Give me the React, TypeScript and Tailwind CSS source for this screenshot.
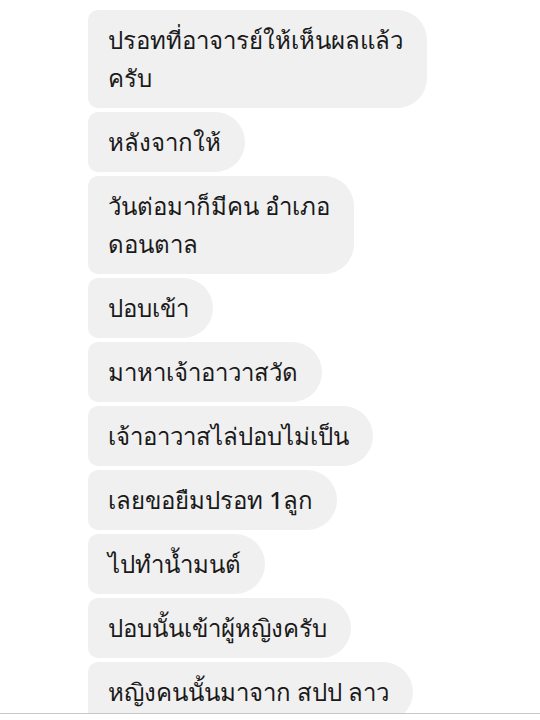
import React from "react";

const msgs: string[][] = [
  ["ปรอทที่อาจารย์ให้เห็นผลแล้ว", "ครับ"],
  ["หลังจากให้"],
  ["วันต่อมาก็มีคน อำเภอ", "ดอนตาล"],
  ["ปอบเข้า"],
  ["มาหาเจ้าอาวาสวัด"],
  ["เจ้าอาวาสไล่ปอบไม่เป็น"],
  ["เลยขอยืมปรอท 1ลูก"],
  ["ไปทำน้ำมนต์"],
  ["ปอบนั้นเข้าผู้หญิงครับ"],
  ["หญิงคนนั้นมาจาก สปป ลาว"],
];

export default function App() {
  return (
    <div className="w-[540px] h-[720px] bg-white overflow-hidden" style={{ fontFamily: '"Noto Sans", "Liberation Sans", sans-serif' }}>
      <div className="h-[713px] overflow-hidden flex flex-col items-start gap-[4px] pt-[10px] pl-[88px]">
        {msgs.map((lines, i) => (
          <div
            key={i}
            className="shrink-0 bg-[#f0f0f0] text-[#1a1a1a] text-[24px] font-medium leading-[38px] pl-[20px] pr-[24px] py-[11px] rounded-l-[10px] rounded-r-[30px] whitespace-nowrap"
          >
            {lines.map((l, j) => (
              <div key={j}>{l}</div>
            ))}
          </div>
        ))}
      </div>
      <div className="h-[7px] border-t border-[#c8c8c8] bg-white" />
    </div>
  );
}
